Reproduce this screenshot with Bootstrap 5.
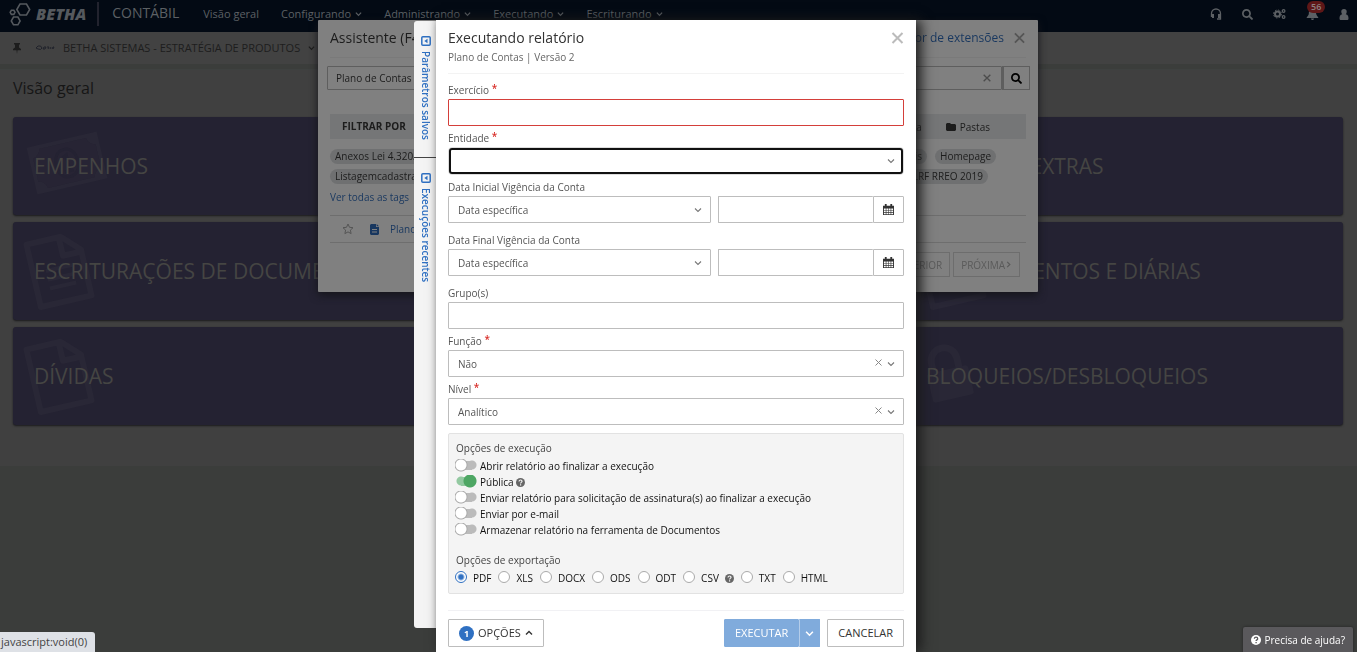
<!DOCTYPE html>
<html lang="pt-BR">
<head>
<meta charset="utf-8">
<meta name="viewport" content="width=device-width, initial-scale=1">
<title>Betha Contábil</title>
<link rel="stylesheet" href="https://cdn.jsdelivr.net/npm/bootstrap@5.3.0/dist/css/bootstrap.min.css">
<style>
:root { --line: #bdbdbd; --blue: #2f70c2; }
body { font-family: "Open Sans", sans-serif; font-size: 10px; line-height: 16px; background: #3b3d3b; color: #333; }
a { text-decoration: none; }
svg { display: block; flex: none; }
button { line-height: 16px; }

/* application behind the dialogs */
.topbar { height: 32px; background: #030a14; color: #5c6064; padding: 0 8px 4px; }
.topbar a { color: #5c6064; font-size: 11px; }
.topbar .wordmark { font-size: 16px; font-weight: 800; font-style: italic; color: #55595e; }
.topbar .product { font-size: 14px; border-left: 2px solid #22232e; height: 24px; margin-left: 11px; padding-left: 13px; line-height: 22px; }
.menu { margin-left: 24px; gap: 22px; }
.tools { gap: 20px; }
.tools button, .plain { border: 0; background: none; padding: 0; color: inherit; }
.count { top: -7px; left: 1px; background: #5e1717; color: #8d7f7f; font-size: 9px; line-height: 12px; border-radius: 7px; padding: 0 4px; font-weight: 600; }
.entity { height: 32px; background: #424242; color: #1d1d1d; font-size: 11px; padding: 0 12px; }
.workspace { margin-top: 5px; border-top: 1px solid #3e4140; background: #404040; padding: 6px 14px 41px 13px; }
.workspace h1 { font-size: 16px; line-height: 24px; color: #161616; margin: 0 0 17px; }
.tiles { display: grid; grid-template-columns: repeat(3, 1fr); gap: 7px 8px; }
.tile { height: 98px; background: #242232; color: #454543; border-radius: 3px; box-shadow: 0 1px 2px #1a1a1c; font-size: 21px; padding-left: 21px; overflow: hidden; white-space: nowrap; }
.tile svg { left: 16px; top: 12px; color: #292736; transform: rotate(-13deg); }

/* dialogs */
.layer { position: fixed; inset: 0; overflow: hidden; padding-top: 20px; }
.helper { max-width: 720px; height: 272px; background: #808080; color: #1c1c1c; border-radius: 1px; box-shadow: 0 3px 9px #15151a; padding: 0 12px; }
.helper h2, .runner h2 { font-size: 14px; line-height: 20px; margin: 0; }
.helper a { color: #18375f; }
.helper header { height: 38px; padding: 0 1px 2px 0; border-bottom: 1px solid #7a7a7a; }
.helper header a { font-size: 12px; }
.helper header .plain { color: #555; margin-left: 10px; }
.helper .search { margin: 8px -4px 0 -3px; }
.helper .search input { height: 24px; border: 1px solid #5e5e5e; background: transparent; font-size: 10px; padding: 0 8px; border-radius: 1px; color: #1c1c1c; }
.helper .search .go { width: 28px; height: 24px; border: 1px solid #5e5e5e; border-left-width: 2px; background: none; padding: 0 7px; }
.filters { margin-top: 24px; height: 25px; background: #757677; }
.filters b { padding: 0 8px 0 12px; line-height: 25px; border-right: 1px solid #6c6e6f; font-weight: 700; }
.pill { background: #6f7071; border-radius: 8px; padding: 0 5px; line-height: 15px; }
.result { height: 28px; margin-top: 10px; border: solid #6e6e6e; border-width: 1px 0; padding-left: 12px; }
.pager { margin: 9px 6px 0 0; gap: 3px; }
.pager button { height: 25px; border: 1px solid #6d6d6d; background: none; color: #5a5a5a; padding: 0 7px; }

.runner-wrap { width: 502px; margin: 0 auto; }
.sidetabs { width: 22px; height: 607px; margin-top: 1px; border-radius: 3px 0 0 3px; background: #f4f4f4; box-shadow: inset -4px 0 4px -3px #ddd; }
.sidetabs button { border: 0; background: none; color: var(--blue); font-weight: 600; padding: 15px 0 0 1px; height: 136px; gap: 5px; }
.sidetabs button + button { border-top: 1px solid #444; }
.sidetabs span { writing-mode: vertical-rl; line-height: 12px; }
.runner { background: #fff; padding: 0 12px 5px; box-shadow: 5px 0 12px #1b1b1b; flex: 1; }
.runner header { height: 54px; padding-top: 8px; border-bottom: 1px solid #f3f3f3; }
.runner header p { margin: 1px 0 0; color: #666; }
.runner label.cap { display: block; height: 21px; line-height: 16px; padding-top: 4px; color: #555; font-weight: 500; }
.req::after { content: " *"; color: #d9302b; font-weight: 600; vertical-align: 2px; line-height: 10px; }
.runner .form-control, .runner .form-select { height: 27px; min-height: 0; border: 1px solid var(--line); border-radius: 1px; font-size: 10px; line-height: 16px; color: #555; padding: 0 9px; }
.runner .form-select { background: #fff url("data:image/svg+xml,%3Csvg xmlns='http://www.w3.org/2000/svg' viewBox='0 0 8 8'%3E%3Cpath d='M1 2.5l3 3 3-3' fill='none' stroke='%23777' stroke-width='1.1'/%3E%3C/svg%3E") no-repeat right 8px center / 8px; }
.runner .form-control.wrong { border-color: #d43f3a; }
.runner .form-select.focused { height: 28px; border-color: #ddd; border-radius: 4px; outline: 2px solid #111; outline-offset: -3px; }
.clear { right: 22px; top: 9px; }
.dates { display: grid; grid-template-columns: 263px 1fr; gap: 7px; margin-bottom: 5px; }
.dates .btn { width: 31px; border: 1px solid var(--line); border-radius: 0 1px 1px 0; padding: 0 9px; }
.options { margin-top: 8px; border: 1px solid #e2e2e2; border-radius: 2px; background: #f4f4f4; padding: 6px 7px 7px 6px; color: #111; }
.options h3 { font-size: 10px; line-height: 16px; margin: 0 0 2px 1px; color: #444; font-weight: 500; }
.options label + h3 { margin-top: 14px; }
.options label { line-height: 16px; }
.toggle { appearance: none; width: 22px; height: 13px; margin: 0 3px 2px 0; background: radial-gradient(circle at 6px 6px, #fff 5px, #aaa 6px, transparent 7px), linear-gradient(#bbb, #bbb) 6px 2px / 11px 9px no-repeat, radial-gradient(circle at 17px 6px, #bbb 4px, transparent 5px); }
.toggle:checked { background: radial-gradient(circle at 15px 6px, #4ea764 6px, transparent 7px), linear-gradient(#93c9a1, #93c9a1) 6px 2px / 11px 9px no-repeat, radial-gradient(circle at 6px 6px, #93c9a1 4px, transparent 5px); }
.dot { appearance: none; width: 12px; height: 12px; margin: 0 6px 2px 0; border: 1px solid #aaa; border-radius: 50%; background: #fff; }
.dot:checked { border-color: var(--blue); background: radial-gradient(circle, var(--blue) 2px, #fff 4px); }
.formats { gap: 7px; }
.hint { color: #666; margin-left: 2px; }
.formats .hint { margin-left: 6px; }
.runner footer { margin-top: 16px; border-top: 1px solid #f1f1f4; padding-top: 8px; }
.runner footer .btn { height: 28px; font-size: 11px; line-height: 16px; padding: 0 10px; border: 1px solid var(--line); border-radius: 1px; color: #333; background: #fff; }
.runner footer .run { background: #80abdc; border-color: #80abdc; color: #fff; font-weight: 500; }
.runner footer .run + .run { border-left-color: #b4cdea; padding: 0 5px; }
.num { width: 15px; height: 15px; line-height: 15px; border-radius: 50%; background: var(--blue); color: #fff; font-size: 9px; font-weight: 700; }
.status { position: fixed; left: 0; bottom: 0; height: 20px; background: #dee1e6; color: #444; font-size: 11px; line-height: 20px; padding: 0 8px 0 1px; border-radius: 0 3px 0 0; }
.support { position: fixed; right: 4px; bottom: 0; height: 25px; border: 0; border-radius: 2px 2px 0 0; background: #5a595c; color: #fff; padding: 0 8px; font-weight: 500; box-shadow: 0 0 3px #222; }
</style>
</head>
<body>
<svg class="d-none" xmlns="http://www.w3.org/2000/svg">
  <symbol id="chev" viewBox="0 0 8 8"><path d="M1 2.5l3 3 3-3" fill="none" stroke="currentColor" stroke-width="1.4"/></symbol>
  <symbol id="lens" viewBox="0 0 512 512"><path fill="currentColor" d="M505 442.7L405.3 343c-4.500-4.500-10.600-7-17-7H372c27.600-35.300 44-79.700 44-128C416 93.100 322.900 0 208 0S0 93.100 0 208s93.100 208 208 208c48.300 0 92.700-16.400 128-44v16.300c0 6.400 2.500 12.500 7 17l99.700 99.700c9.400 9.400 24.600 9.400 33.900 0l28.300-28.300c9.400-9.400 9.400-24.600.1-34zM208 336c-70.700 0-128-57.200-128-128 0-70.700 57.200-128 128-128 70.700 0 128 57.200 128 128 0 70.700-57.200 128-128 128z"/></symbol>
  <symbol id="cross" viewBox="0 0 12 12"><path d="M1 1l10 10M11 1L1 11" fill="none" stroke="currentColor" stroke-width="2"/></symbol>
  <symbol id="ask" viewBox="0 0 10 10"><circle cx="5" cy="5" r="5" fill="currentColor"/><path d="M3.400 3.800c0-2.200 3.300-2 3.300-.1 0 1.200-1.600 1.100-1.600 2.300M5.100 7v1.200" fill="none" stroke="var(--q,#f4f4f4)" stroke-width="1.300"/></symbol>
  <symbol id="page" viewBox="0 0 60 72"><path d="M4 4h35l17 17v47H4zM37 4v19h19" fill="none" stroke="currentColor" stroke-width="6" stroke-linejoin="round"/></symbol>
  <symbol id="cal" viewBox="0 0 12 12"><path fill="#333" d="M0 2h2V0h2v2h4V0h2v2h2v10H0z"/><path fill="#fff" d="M1 4.800h2v1.700H1zM3.700 4.800h2v1.700h-2zM6.300 4.800h2v1.700h-2zM9 4.800h2v1.700H9zM1 7.200h2v1.600H1zM3.700 7.200h2v1.600h-2zM6.300 7.200h2v1.600h-2zM9 7.200h2v1.600H9zM1 9.500h2v1.700H1zM3.700 9.500h2v1.700h-2zM6.300 9.500h2v1.700h-2zM9 9.500h2v1.700H9z"/></symbol>
  <symbol id="panel" viewBox="0 0 10 10"><rect x=".8" y=".8" width="8.400" height="8.400" rx="1" fill="none" stroke="currentColor" stroke-width="1.500"/><path d="M6.500 2.700v4.600L3.300 5z" fill="currentColor"/></symbol>
</svg>

<nav class="topbar d-flex align-items-center">
  <svg width="24" height="26" viewBox="0 0 24 26" fill="none" stroke="#55595e" stroke-width="1.600"><path d="M12 3h6.500l3.200 5.500-3.200 5.500H12L8.800 8.500zM5.500 16h4.400l2.200 3.900-2.200 3.900H5.500l-2.200-3.900zM3.400 9.200h2.400l1.200 2.100-1.200 2.100H3.400l-1.200-2.100z"/></svg>
  <span class="wordmark ms-1">BETHA</span>
  <span class="product">CONTÁBIL</span>
  <div class="menu d-flex">
    <a href="#">Visão geral</a>
    <a href="#" class="d-flex align-items-center gap-1">Configurando <svg width="7" height="8"><use href="#chev"/></svg></a>
    <a href="#" class="d-flex align-items-center gap-1">Administrando <svg width="7" height="8"><use href="#chev"/></svg></a>
    <a href="#" class="d-flex align-items-center gap-1">Executando <svg width="7" height="8"><use href="#chev"/></svg></a>
    <a href="#" class="d-flex align-items-center gap-1">Escriturando <svg width="7" height="8"><use href="#chev"/></svg></a>
  </div>
  <div class="tools d-flex align-items-center ms-auto">
    <button aria-label="Suporte"><svg width="12" height="12" viewBox="0 0 12 12" fill="none" stroke="currentColor" stroke-width="1.300"><path d="M1.500 9V5.500a4.500 4.500 0 0 1 9 0V11H7"/><path d="M3 6v4M9 6v4" stroke-width="2"/></svg></button>
    <button aria-label="Pesquisar"><svg width="11" height="11"><use href="#lens"/></svg></button>
    <button aria-label="Configurações"><svg width="13" height="12" viewBox="0 0 13 12" fill="none" stroke="currentColor"><circle cx="4.500" cy="6" r="2.500" stroke-width="2"/><circle cx="4.500" cy="6" r="4" stroke-dasharray="1.600 1.540"/><circle cx="10.600" cy="3" r="1.300" stroke-width="1.300"/><circle cx="10.600" cy="9" r="1.300" stroke-width="1.300"/></svg></button>
    <button class="position-relative" aria-label="Notificações"><svg width="13" height="12" viewBox="0 0 13 12"><path fill="currentColor" d="M6.500 0C3 .6 3 3.500 2.800 6 2.600 7.500 1 8.500.5 10h12c-.5-1.500-2.100-2.500-2.300-4C10 3.500 10 .6 6.500 0zM5 10.500h3c-.3 2-2.700 2-3 0z"/></svg><span class="count position-absolute">56</span></button>
    <button aria-label="Usuário"><svg width="10" height="11" viewBox="0 0 10 11"><path fill="currentColor" d="M5 0a2.700 2.700 0 0 1 2.700 2.900c0 1-.4 1.800-.9 2.300C9 5.500 9.500 7.500 9.500 9.500c0 1-.7 1.500-1.500 1.500H2C1.200 11 .5 10.500.5 9.500c0-2 .5-4 2.700-4.300-.5-.5-.9-1.300-.9-2.300A2.700 2.700 0 0 1 5 0z"/></svg></button>
  </div>
</nav>
<div class="entity d-flex align-items-center">
  <svg width="10" height="11" viewBox="0 0 10 11" fill="currentColor"><path d="M2 0h6v1L7 2v2.500l2 1.500v1.200H5.500L5 11l-.5-3.800H1V6l2-1.500V2L2 1z"/></svg>
  <svg width="20" height="6" viewBox="0 0 20 6" style="margin-left:13px"><path d="M1 3l2-2h2.500L7 3 5.500 4.500 3 4zM8 4l1-2h2l-1 2zM12 2h2l-1 2M15 4l1-2M17 4l1-2h1l-1 2" fill="none" stroke="#20222b"/></svg>
  <span class="ms-2">BETHA SISTEMAS - ESTRATÉGIA DE PRODUTOS</span>
  <svg width="7" height="8" class="ms-2"><use href="#chev"/></svg>
</div>
<main class="workspace">
  <h1>Visão geral</h1>
  <div class="tiles">
    <div class="tile position-relative d-flex align-items-center"><svg class="position-absolute" style="top:18px" width="76" height="56" viewBox="0 0 76 56"><path fill="currentColor" fill-rule="evenodd" d="M2 4h72v48H2zM14 8a9 9 0 0 1-8 8v24a9 9 0 0 1 8 8h48a9 9 0 0 1 8-8V16a9 9 0 0 1-8-8z"/><path fill="currentColor" opacity=".6" d="M14 8h48a9 9 0 0 0 8 8v24a9 9 0 0 0-8 8H14a9 9 0 0 0-8-8V16a9 9 0 0 0 8-8z"/><path fill="none" stroke="#242232" stroke-width="3" d="M38 14c7 0 11 6 11 14s-4 14-11 14-11-6-11-14 4-14 11-14zM35 22l4-2v16M34 36h9"/></svg><span class="position-relative">EMPENHOS</span></div>
    <div class="tile"></div>
    <div class="tile position-relative d-flex align-items-center"><span>DESPESAS EXTRAS</span></div>
    <div class="tile position-relative d-flex align-items-center"><svg class="position-absolute" width="60" height="72" viewBox="0 0 60 72"><use href="#page"/><path d="M17 34h27M17 43h27M17 52h27" stroke="currentColor" stroke-width="4"/></svg><span class="position-relative">ESCRITURAÇÕES DE DOCUMENTOS</span></div>
    <div class="tile"></div>
    <div class="tile position-relative d-flex align-items-center"><svg class="position-absolute" width="60" height="72"><use href="#page"/></svg><span class="position-relative">ADIANTAMENTOS E DIÁRIAS</span></div>
    <div class="tile position-relative d-flex align-items-center"><svg class="position-absolute" width="60" height="72"><use href="#page"/></svg><span class="position-relative">DÍVIDAS</span></div>
    <div class="tile"></div>
    <div class="tile position-relative d-flex align-items-center"><svg class="position-absolute" style="top:16px" width="56" height="60" viewBox="0 0 56 60"><rect x="6" y="26" width="42" height="30" rx="3" fill="currentColor"/><path d="M13 28V17a13 13 0 0 1 26 0v11" fill="none" stroke="currentColor" stroke-width="7"/></svg><span class="position-relative">BLOQUEIOS/DESBLOQUEIOS</span></div>
  </div>
</main>

<div class="layer" style="padding-right:1px">
  <section class="helper mx-auto">
    <header class="d-flex align-items-center">
      <h2>Assistente (F4)</h2>
      <a href="#" class="ms-auto">Gerenciador de extensões</a>
      <button class="plain" aria-label="Fechar"><svg width="11" height="12"><use href="#cross"/></svg></button>
    </header>
    <div class="search d-flex position-relative">
      <input class="flex-fill" aria-label="Pesquisar" value="Plano de Contas">
      <button class="plain position-absolute" style="right:39px;top:8px;color:#4c4c4c" aria-label="Limpar"><svg width="8" height="8"><use href="#cross"/></svg></button>
      <button class="go" aria-label="Buscar"><svg width="11" height="11"><use href="#lens"/></svg></button>
    </div>
    <div class="filters d-flex align-items-center">
      <b>FILTRAR POR</b>
      <span class="ms-auto pe-4">Ferramenta</span>
      <span class="d-flex align-items-center gap-1" style="padding-right:36px"><svg width="10" height="8" viewBox="0 0 10 8"><path fill="currentColor" d="M0 1l1-1h3l1 1h4l1 1v5L9 8H1L0 7z"/></svg>Pastas</span>
    </div>
    <div class="d-flex justify-content-between" style="margin-top:10px"><span class="pill">Anexos Lei 4.320/64</span><span class="d-flex gap-2" style="margin-right:30px"><span class="pill">Gerenciais</span><span class="pill">Homepage</span></span></div>
    <div class="d-flex justify-content-between" style="margin-top:5px"><span class="pill">Listagemcadastral</span><span class="pill" style="margin-right:38px">LRF RREO 2019</span></div>
    <a href="#" class="d-block" style="margin-top:5px">Ver todas as tags</a>
    <div class="result d-flex align-items-center">
      <svg width="12" height="12" viewBox="0 0 12 12" fill="none" stroke="#555"><path d="M6 1l1.500 3.300 3.500.4-2.600 2.400.7 3.500L6 8.900l-3.100 1.700.7-3.500L1 4.700l3.500-.4z"/></svg>
      <svg width="9" height="11" viewBox="0 0 9 11" style="margin:0 11px 0 16px"><path fill="#18375f" fill-rule="evenodd" d="M0 1l1-1h5v3h3v7l-1 1H1l-1-1zM2 5v1h5V5zM2 7.500v1h5v-1zM6.700 0L9 2.300H6.700z"/></svg>
      <a href="#">Plano de Contas</a>
    </div>
    <div class="pager d-flex justify-content-end"><button disabled>ANTERIOR</button><button disabled class="d-flex align-items-center">PRÓXIMA<svg width="7" height="7" style="transform:rotate(-90deg)"><use href="#chev"/></svg></button></div>
  </section>
</div>

<div class="layer" style="padding-right:27px">
  <div class="runner-wrap d-flex align-items-start">
    <aside class="sidetabs">
      <button class="d-flex flex-column align-items-center w-100"><svg width="10" height="10"><use href="#panel"/></svg><span>Parâmetros salvos</span></button>
      <button class="d-flex flex-column align-items-center w-100"><svg width="10" height="10"><use href="#panel"/></svg><span>Execuções recentes</span></button>
    </aside>
    <section class="runner" role="dialog" aria-labelledby="ttl">
      <header class="d-flex justify-content-between align-items-start">
        <div><h2 id="ttl">Executando relatório</h2><p>Plano de Contas | Versão 2</p></div>
        <button class="plain pt-1" aria-label="Fechar" style="color:#bbb"><svg width="13" height="12"><use href="#cross"/></svg></button>
      </header>
      <form class="pt-1">
        <label class="cap req" for="ex">Exercício</label>
        <input id="ex" class="form-control wrong">
        <label class="cap req" for="en">Entidade</label>
        <select id="en" class="form-select focused"><option></option></select>
        <label class="cap" for="di">Data Inicial Vigência da Conta</label>
        <div class="dates">
          <select id="di" class="form-select"><option>Data específica</option></select>
          <div class="d-flex"><input class="form-control border-end-0" aria-label="Data inicial"><button type="button" class="btn" aria-label="Calendário"><svg width="11" height="11"><use href="#cal"/></svg></button></div>
        </div>
        <label class="cap" for="df">Data Final Vigência da Conta</label>
        <div class="dates">
          <select id="df" class="form-select"><option>Data específica</option></select>
          <div class="d-flex"><input class="form-control border-end-0" aria-label="Data final"><button type="button" class="btn" aria-label="Calendário"><svg width="11" height="11"><use href="#cal"/></svg></button></div>
        </div>
        <label class="cap" for="gr">Grupo(s)</label>
        <input id="gr" class="form-control">
        <label class="cap req" for="fu">Função</label>
        <div class="position-relative"><select id="fu" class="form-select"><option>Não</option></select><button type="button" class="plain clear position-absolute" aria-label="Limpar"><svg width="7" height="7" viewBox="0 0 7 7"><path d="M.5.5l6 6M6.500.5l-6 6" stroke="#888"/></svg></button></div>
        <label class="cap req" for="ni">Nível</label>
        <div class="position-relative"><select id="ni" class="form-select"><option>Analítico</option></select><button type="button" class="plain clear position-absolute" aria-label="Limpar"><svg width="7" height="7" viewBox="0 0 7 7"><path d="M.5.5l6 6M6.500.5l-6 6" stroke="#888"/></svg></button></div>
        <div class="options">
          <h3>Opções de execução</h3>
          <label class="d-flex align-items-center"><input type="checkbox" class="toggle">Abrir relatório ao finalizar a execução</label>
          <label class="d-flex align-items-center"><input type="checkbox" class="toggle" checked>Pública<svg width="9" height="9" class="hint"><use href="#ask"/></svg></label>
          <label class="d-flex align-items-center"><input type="checkbox" class="toggle">Enviar relatório para solicitação de assinatura(s) ao finalizar a execução</label>
          <label class="d-flex align-items-center"><input type="checkbox" class="toggle">Enviar por e-mail</label>
          <label class="d-flex align-items-center"><input type="checkbox" class="toggle">Armazenar relatório na ferramenta de Documentos</label>
          <h3>Opções de exportação</h3>
          <div class="formats d-flex align-items-center">
            <label class="d-flex align-items-center"><input type="radio" name="f" class="dot" checked>PDF</label>
            <label class="d-flex align-items-center"><input type="radio" name="f" class="dot">XLS</label>
            <label class="d-flex align-items-center"><input type="radio" name="f" class="dot">DOCX</label>
            <label class="d-flex align-items-center"><input type="radio" name="f" class="dot">ODS</label>
            <label class="d-flex align-items-center"><input type="radio" name="f" class="dot">ODT</label>
            <label class="d-flex align-items-center"><input type="radio" name="f" class="dot">CSV<svg width="9" height="9" class="hint"><use href="#ask"/></svg></label>
            <label class="d-flex align-items-center"><input type="radio" name="f" class="dot">TXT</label>
            <label class="d-flex align-items-center"><input type="radio" name="f" class="dot">HTML</label>
          </div>
        </div>
        <footer class="d-flex">
          <button type="button" class="btn d-flex align-items-center"><span class="num me-1">1</span>OPÇÕES<svg width="8" height="8" class="ms-1" style="transform:rotate(180deg)"><use href="#chev"/></svg></button>
          <div class="d-flex ms-auto" style="margin-right:7px"><button type="button" class="btn run">EXECUTAR</button><button type="button" class="btn run" aria-label="Mais opções"><svg width="9" height="9"><use href="#chev"/></svg></button></div>
          <button type="button" class="btn">CANCELAR</button>
        </footer>
      </form>
    </section>
  </div>
</div>
<div class="status">javascript:void(0)</div>
<button class="support d-flex align-items-center gap-1"><svg width="10" height="10" style="--q:#5a595c"><use href="#ask"/></svg>Precisa de ajuda?</button>
<script src="https://cdn.jsdelivr.net/npm/bootstrap@5.3.0/dist/js/bootstrap.bundle.min.js"></script>
</body>
</html>
